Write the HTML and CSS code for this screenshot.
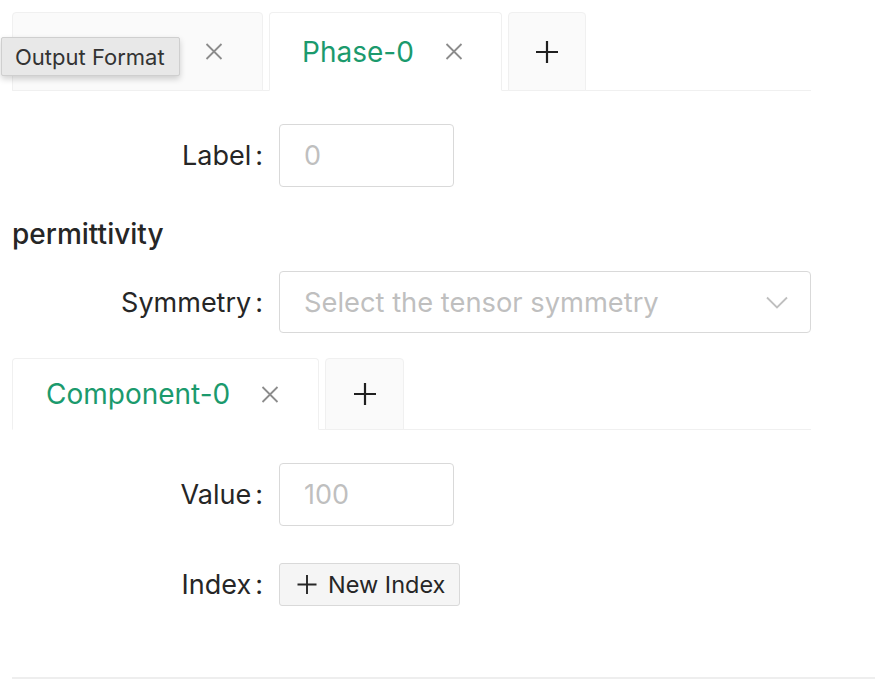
FILE: index.html
```html
<!DOCTYPE html>
<html lang="en">
<head>
<meta charset="utf-8">
<title>Phase editor</title>
<link rel="stylesheet" href="styles.css">
</head>
<body>
<div class="page">
  <div class="tab-nav tab-nav-lg">
    <div class="tab">
      <span class="tab-label tab-label-trunc">Output Format</span>
      <svg class="tab-close" width="18" height="17" viewBox="0 0 18 17"><path d="M1.5 1 L16.5 16 M16.5 1 L1.5 16" stroke="#8c8c8c" stroke-width="1.8" fill="none"/></svg>
    </div>
    <div class="tab tab-active">
      <span class="tab-label">Phase-0</span>
      <svg class="tab-close" width="18" height="17" viewBox="0 0 18 17"><path d="M1.5 1 L16.5 16 M16.5 1 L1.5 16" stroke="#8c8c8c" stroke-width="1.8" fill="none"/></svg>
    </div>
    <div class="tab tab-add">
      <svg width="24" height="22" viewBox="0 0 24 22"><path d="M12 0 V22 M1 11 H23" stroke="#1f1f1f" stroke-width="2.2" fill="none"/></svg>
    </div>
  </div>

  <div class="tooltip">Output Format</div>

  <div class="form-row row-label">
    <div class="form-label">Label<span class="colon">:</span></div>
    <div class="input input-short"><span class="placeholder">0</span></div>
  </div>

  <div class="section-title">permittivity</div>

  <div class="form-row row-sym">
    <div class="form-label">Symmetry<span class="colon">:</span></div>
    <div class="input select">
      <span class="placeholder">Select the tensor symmetry</span>
      <svg class="chevron" width="22" height="13" viewBox="0 0 22 13"><path d="M1 1.5 L11 11.5 L21 1.5" stroke="#bfbfbf" stroke-width="1.8" fill="none"/></svg>
    </div>
  </div>

  <div class="tab-nav tab-nav-sm">
    <div class="tab tab-active tab-comp">
      <span class="tab-label">Component-0</span>
      <svg class="tab-close" width="18" height="17" viewBox="0 0 18 17"><path d="M1.5 1 L16.5 16 M16.5 1 L1.5 16" stroke="#8c8c8c" stroke-width="1.8" fill="none"/></svg>
    </div>
    <div class="tab tab-add tab-add-sm">
      <svg width="24" height="22" viewBox="0 0 24 22"><path d="M12 0 V22 M1 11 H23" stroke="#1f1f1f" stroke-width="2.2" fill="none"/></svg>
    </div>
  </div>

  <div class="form-row row-value">
    <div class="form-label">Value<span class="colon">:</span></div>
    <div class="input input-short"><span class="placeholder">100</span></div>
  </div>

  <div class="form-row row-index">
    <div class="form-label">Index<span class="colon">:</span></div>
    <button class="btn" type="button">
      <svg width="20" height="19" viewBox="0 0 20 19"><path d="M10 0 V19 M0.5 9.5 H19.5" stroke="#262626" stroke-width="1.9" fill="none"/></svg>
      <span>New Index</span>
    </button>
  </div>

  <div class="divider"></div>
</div>
</body>
</html>
```

FILE: styles.css
```css
html, body {
  margin: 0;
  padding: 0;
  background: #ffffff;
}

body {
  font-family: "Inter", "Liberation Sans", sans-serif;
  color: #262626;
}

.page {
  position: relative;
  padding: 12px 0 0 12px;
  display: flex;
  flex-direction: column;
  align-items: flex-start;
}

.tab-nav {
  display: flex;
  gap: 6px;
  width: 799px;
  border-bottom: 1px solid #f0f0f0;
}

.tab {
  position: relative;
  margin-bottom: -1px;
  display: flex;
  align-items: center;
  box-sizing: border-box;
  background: #fafafa;
  border: 1px solid #f0f0f0;
  border-radius: 4px 4px 0 0;
  padding: 0 39px 0 32px;
  font-size: 28px;
  color: #262626;
}

.tab-nav-lg .tab {
  height: 79px;
}

.tab-nav-lg .tab-active {
  padding-right: 38px;
}

.tab-nav-sm .tab {
  height: 72px;
}

.tab-active {
  background: #ffffff;
  border-bottom-color: #ffffff;
}

.tab-active .tab-label {
  color: #1b9a6d;
}

.tab-label {
  white-space: nowrap;
  line-height: 36px;
}

.tab-label-trunc {
  width: 129px;
  overflow: hidden;
  text-overflow: ellipsis;
}

.tab-close {
  margin-left: 31px;
  flex: none;
}

.tab-comp {
  padding-left: 33px;
}

.tab-add {
  width: 78px;
  padding: 0;
  justify-content: center;
}

.tab-nav-lg .tab-add {
  padding: 0;
}

.tab-add-sm {
  width: 79px;
}

.tooltip {
  position: absolute;
  left: 1px;
  top: 37px;
  width: 179px;
  height: 39px;
  box-sizing: border-box;
  display: flex;
  align-items: center;
  padding-left: 13px;
  background: #e8e8e8;
  border: 1px solid #cfcfcf;
  border-radius: 2px;
  box-shadow: 0 3px 6px rgba(0, 0, 0, 0.18);
  font-size: 22px;
  color: #333333;
  white-space: nowrap;
}

.form-row {
  display: flex;
  align-items: center;
  gap: 16px;
}

.form-label {
  width: 251px;
  text-align: right;
  font-size: 27px;
  color: #262626;
  white-space: nowrap;
}

.colon {
  margin-left: 4px;
}

.input {
  box-sizing: border-box;
  height: 63px;
  border: 1px solid #d9d9d9;
  border-radius: 4px;
  display: flex;
  align-items: center;
  padding: 0 24px;
  font-size: 27px;
  background: #ffffff;
}

.input-short {
  width: 175px;
}

.placeholder {
  color: #bfbfbf;
  white-space: nowrap;
}

.select {
  width: 532px;
  height: 62px;
  justify-content: space-between;
  padding-right: 22px;
  font-size: 27.3px;
}

.row-label {
  margin-top: 33px;
}

.section-title {
  margin-top: 29px;
  font-size: 28px;
  line-height: 36px;
  font-weight: 500;
  color: #262626;
}

.row-sym {
  margin-top: 19px;
}

.tab-nav-sm {
  margin-top: 25px;
}

.row-value {
  margin-top: 33px;
}

.row-index {
  margin-top: 37px;
}

.btn {
  box-sizing: border-box;
  height: 43px;
  width: 181px;
  display: flex;
  align-items: center;
  gap: 11px;
  padding: 0 0 0 17px;
  background: #f5f5f5;
  border: 1px solid #d9d9d9;
  border-radius: 3px;
  font-family: "Inter", "Liberation Sans", sans-serif;
  font-size: 23.5px;
  color: #262626;
}

.divider {
  margin-top: 71px;
  width: 863px;
  height: 2px;
  background: #eeeeee;
}
```
